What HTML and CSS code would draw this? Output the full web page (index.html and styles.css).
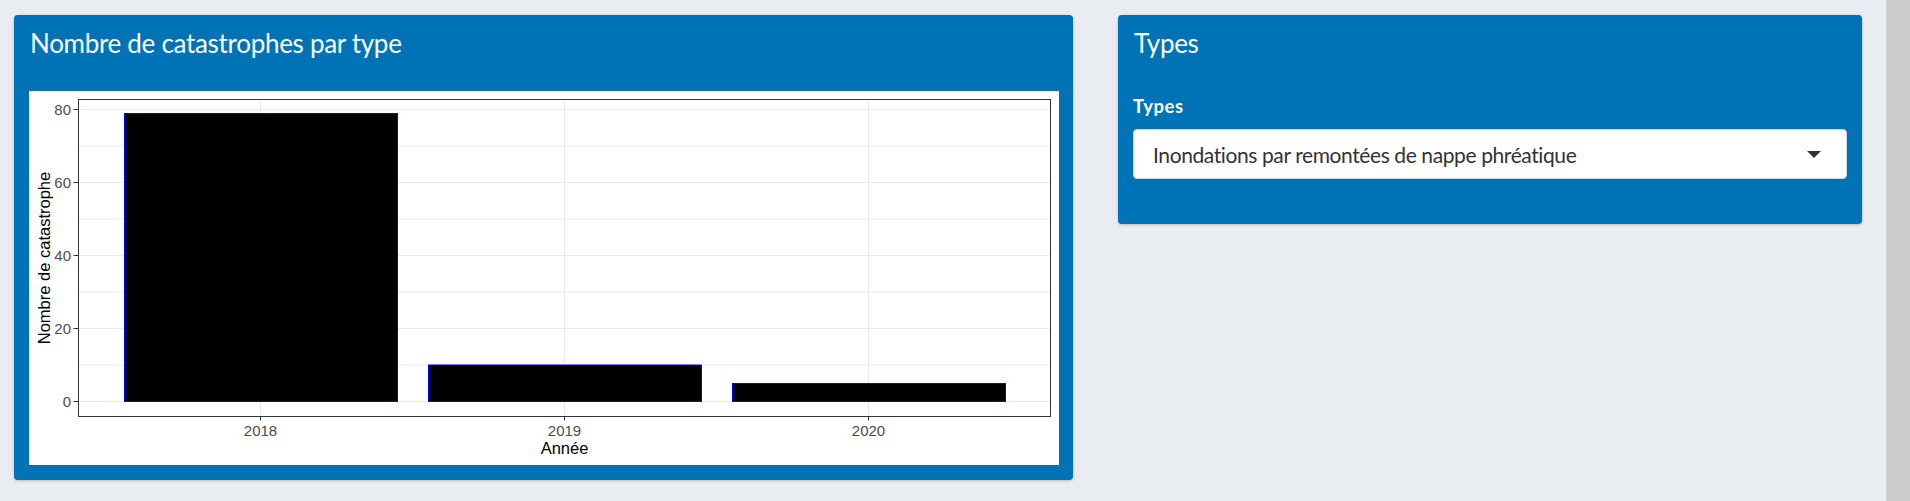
FILE: index.html
```html
<!DOCTYPE html>
<html lang="fr">
<head>
<meta charset="utf-8">
<title>Catastrophes</title>
<link rel="stylesheet" href="styles.css">
</head>
<body>
<div class="main">
  <section class="card card-plot">
    <header class="card-header"><h3 class="card-title">Nombre de catastrophes par type</h3></header>
    <div class="card-body">
      <div class="plot">
        <svg class="plot-svg" viewBox="0 0 1030 374" width="1030" height="374">
          <g class="grid-minor">
            <line x1="49.5" x2="1021.5" y1="274" y2="274"/>
            <line x1="49.5" x2="1021.5" y1="201" y2="201"/>
            <line x1="49.5" x2="1021.5" y1="128" y2="128"/>
            <line x1="49.5" x2="1021.5" y1="55" y2="55"/>
          </g>
          <g class="grid-major">
            <line x1="49.5" x2="1021.5" y1="310.5" y2="310.5"/>
            <line x1="49.5" x2="1021.5" y1="237.5" y2="237.5"/>
            <line x1="49.5" x2="1021.5" y1="164.5" y2="164.5"/>
            <line x1="49.5" x2="1021.5" y1="91.5" y2="91.5"/>
            <line x1="49.5" x2="1021.5" y1="18.5" y2="18.5"/>
            <line x1="231.5" x2="231.5" y1="8.5" y2="325.5"/>
            <line x1="535.5" x2="535.5" y1="8.5" y2="325.5"/>
            <line x1="839.5" x2="839.5" y1="8.5" y2="325.5"/>
          </g>
          <g class="bars">
            <rect x="95.5" y="22.5" width="273" height="288"/>
            <rect x="399.5" y="274" width="273" height="36.5"/>
            <rect x="703.5" y="292.5" width="273" height="18"/>
          </g>
          <rect class="panel" x="49.5" y="8.5" width="972" height="317"/>
          <g class="ticks">
            <line x1="44.5" x2="49.5" y1="310.5" y2="310.5"/>
            <line x1="44.5" x2="49.5" y1="237.5" y2="237.5"/>
            <line x1="44.5" x2="49.5" y1="164.5" y2="164.5"/>
            <line x1="44.5" x2="49.5" y1="91.5" y2="91.5"/>
            <line x1="44.5" x2="49.5" y1="18.5" y2="18.5"/>
            <line x1="231.5" x2="231.5" y1="325.5" y2="329.5"/>
            <line x1="535.5" x2="535.5" y1="325.5" y2="329.5"/>
            <line x1="839.5" x2="839.5" y1="325.5" y2="329.5"/>
          </g>
          <g class="tick-y">
            <text x="42" y="315.5">0</text>
            <text x="42" y="242.5">20</text>
            <text x="42" y="169.5">40</text>
            <text x="42" y="96.5">60</text>
            <text x="42" y="23.5">80</text>
          </g>
          <g class="tick-x">
            <text x="231.5" y="344.5">2018</text>
            <text x="535.5" y="344.5">2019</text>
            <text x="839.5" y="344.5">2020</text>
          </g>
          <text class="axis-title" x="535.5" y="363">Année</text>
          <text class="axis-title" transform="translate(21 167) rotate(-90)" x="0" y="0">Nombre de catastrophe</text>
        </svg>
      </div>
    </div>
  </section>
  <section class="card card-types">
    <header class="card-header"><h3 class="card-title">Types</h3></header>
    <div class="card-body">
      <label class="field-label">Types</label>
      <div class="select">
        <span class="select-value">Inondations par remontées de nappe phréatique</span>
        <span class="caret"></span>
      </div>
    </div>
  </section>
</div>
<div class="scrollbar"></div>
</body>
</html>
```
FILE: styles.css
```css
html, body {
  margin: 0;
  padding: 0;
}
body {
  background: #e9edf2;
  display: flex;
  height: 501px;
  overflow: hidden;
  font-family: Lato, "Open Sans", sans-serif;
}
.main {
  flex: 1;
  display: flex;
  align-items: flex-start;
  gap: 45px;
  padding: 15px 0 0 14px;
}
.scrollbar {
  width: 24px;
  background: #cdcdcd;
  border-left: 1px solid #f2f2f2;
}
.card {
  background: #0073b7;
  border-radius: 4px;
  box-shadow: 0 0 1px rgba(0,0,0,.125), 0 1px 3px rgba(0,0,0,.2);
  color: #fff;
}
.card-plot { width: 1059px; }
.card-types { width: 744px; }
.card-header {
  height: 61px;
  box-sizing: border-box;
  padding: 13px 16px 0;
}
.card-title {
  margin: 0;
  font-size: 26px;
  font-weight: 400;
  line-height: 1.2;
  letter-spacing: -0.3px;
}
.card-body {
  padding: 15px;
}
.plot {
  background: #fff;
  width: 1030px;
  height: 374px;
}
.plot-svg { display: block; }
.grid-minor line { stroke: #ebebeb; stroke-width: 1; }
.grid-major line { stroke: #ebebeb; stroke-width: 1; }
.bars rect { fill: #000; stroke: #0000ff; stroke-width: 1; }
.panel { fill: none; stroke: #333; stroke-width: 1; }
.ticks line { stroke: #333; stroke-width: 1; }
.tick-y text, .tick-x text {
  font-family: "Liberation Sans Narrow", "Liberation Sans", Arial, sans-serif;
  font-size: 15px;
  fill: #4d4d4d;
}
.tick-y text { text-anchor: end; }
.tick-x text { text-anchor: middle; }
.axis-title {
  font-family: "Liberation Sans", Arial, sans-serif;
  font-size: 16.5px;
  fill: #000;
  text-anchor: middle;
}
.field-label {
  display: block;
  font-size: 18.5px;
  font-weight: 700;
  line-height: 1.2;
  letter-spacing: 0.6px;
  padding-top: 4px;
  margin-bottom: 12px;
}
.select {
  height: 50px;
  box-sizing: border-box;
  background: #fff;
  border: 1px solid #cfd6de;
  border-radius: 4px;
  display: flex;
  align-items: center;
  padding-left: 19px;
  margin-bottom: 30px;
  color: #333;
}
.select-value {
  font-size: 21px;
  letter-spacing: -0.4px;
}
.caret {
  margin-left: auto;
  margin-right: 25px;
  width: 0;
  height: 0;
  border-left: 7px solid transparent;
  border-right: 7px solid transparent;
  border-top: 7px solid #333;
}
```
